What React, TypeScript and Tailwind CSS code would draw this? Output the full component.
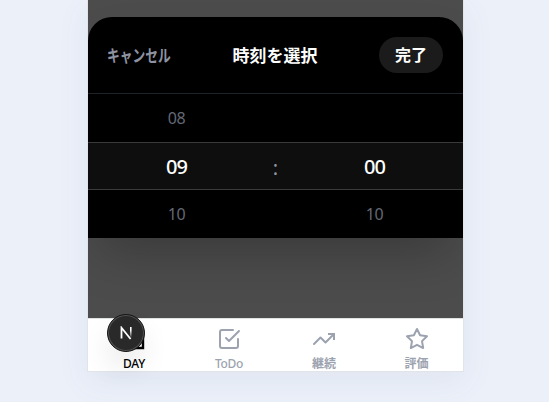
import type { ReactNode } from "react";

function TabIcon({ children }: { children: ReactNode }) {
  return (
    <svg className="size-6 shrink-0" viewBox="0 0 24 24" fill="none" stroke="currentColor" strokeWidth="2" strokeLinecap="round" strokeLinejoin="round">
      {children}
    </svg>
  );
}

const tabs = [
  {
    label: "DAY",
    style: "w-[92px] text-black",
    labelStyle: "tracking-[-0.3px]",
    icon: (
      <>
        <path d="M3 4h18v17H3z" strokeWidth="2.4" strokeLinejoin="miter" />
        <path d="M3 10h18M8 2v4M16 2v4" />
      </>
    ),
  },
  {
    label: "ToDo",
    style: "w-[98px] text-[#9ca3af]",
    labelStyle: "tracking-[-0.3px]",
    icon: (
      <>
        <path d="m9 11 3 3L22 4" />
        <path d="M21 12v7a2 2 0 0 1-2 2H5a2 2 0 0 1-2-2V5a2 2 0 0 1 2-2h11" />
      </>
    ),
  },
  {
    label: "継続",
    style: "w-[92px] text-[#9ca3af]",
    labelStyle: "font-bold",
    icon: (
      <>
        <path d="m22 7-8.5 8.5-5-5L2 17" />
        <path d="M16 7h6v6" strokeLinecap="butt" strokeLinejoin="miter" />
      </>
    ),
  },
  {
    label: "評価",
    style: "w-[93px] text-[#9ca3af]",
    labelStyle: "font-bold",
    icon: <path d="m12 2 3.09 6.26L22 9.27l-5 4.87 1.18 6.88L12 17.77l-6.18 3.25L7 14.14 2 9.27l6.91-1.01z" />,
  },
];

function Wheel({ values }: { values: string[] }) {
  return (
    <div className="flex w-[177px] flex-col">
      {values.map((v, i) => (
        <div
          key={i}
          className={
            i === 1
              ? "flex h-12 items-center justify-center pt-[2px] text-[20px] tracking-[-0.9px] font-medium text-white"
              : "flex h-12 items-center justify-center text-[16px] tracking-[-0.5px] text-[#636975]"
          }
        >
          {v}
        </div>
      ))}
    </div>
  );
}

export default function App() {
  return (
    <div className="flex h-[402px] overflow-hidden bg-[#ebf0f9] pl-[87px] font-['Noto_Sans','Noto_Sans_CJK_JP',sans-serif]">
      <div className="relative h-[372px] w-[377px] border-x border-b border-[#e1e4e8] bg-white shadow-[0_10px_30px_rgba(100,120,150,0.08)]">
        <div className="h-[318px] overflow-hidden bg-[#4b4c4b] pt-[17px]">
          <section className="rounded-t-[24px] bg-black shadow-[0_25px_50px_-12px_rgba(0,0,0,0.25)]">
            <header className="flex h-[77px] items-center justify-between border-b border-[#1e2329] px-5">
              <button className="-ml-px w-[65px] pt-px text-left text-[17px] font-bold whitespace-nowrap text-[#8d93a0]">
                <span className="inline-block origin-left scale-x-75">キャンセル</span>
              </button>
              <h1 className="pt-px pr-px text-[17px] font-bold text-white">時刻を選択</h1>
              <button className="h-9 w-16 rounded-full bg-[#1b1b1b] text-[16px] font-bold text-white">完了</button>
            </header>
            <div className="relative flex h-36 items-center justify-between">
              <div className="absolute inset-x-0 top-12 h-12 border-y border-[#3a3a3a] bg-[#0e0e0e]" />
              <div className="relative flex w-full items-center justify-between">
                <Wheel values={["08", "09", "10"]} />
                <span className="pt-[4px] text-[20px] text-[#9297a1]">:</span>
                <Wheel values={["", "00", "10"]} />
              </div>
            </div>
          </section>
        </div>
        <nav className="flex h-[53px] border-t border-[#dfe2e2] bg-white">
          {tabs.map((t) => (
            <div key={t.label} className={`flex flex-col items-center pt-2 text-[12px] leading-4 font-medium ${t.style}`}>
              <TabIcon>{t.icon}</TabIcon>
              <span className={`mt-[5px] -mb-1 ${t.labelStyle}`}>{t.label}</span>
            </div>
          ))}
        </nav>
        <div className="absolute top-[314px] left-[19px] flex size-[38px] items-center justify-center rounded-full border border-[#171717] bg-[#292929] shadow-[inset_0_0_0_1px_#555,0_16px_32px_-8px_rgba(0,0,0,0.24)]">
          <svg className="h-[14px] w-[13px]" viewBox="0 0 13 14" fill="none">
            <defs>
              <linearGradient id="stem" x1="0" y1="0" x2="0" y2="14" gradientUnits="userSpaceOnUse">
                <stop offset=".3" stopColor="#fff" />
                <stop offset=".85" stopColor="#fff" stopOpacity="0" />
              </linearGradient>
            </defs>
            <path d="M1.5 12.5V1.8L10.6 13" stroke="#fff" strokeWidth="1.8" />
            <path d="M10 1h1.6v11H10z" fill="url(#stem)" />
          </svg>
        </div>
      </div>
    </div>
  );
}
